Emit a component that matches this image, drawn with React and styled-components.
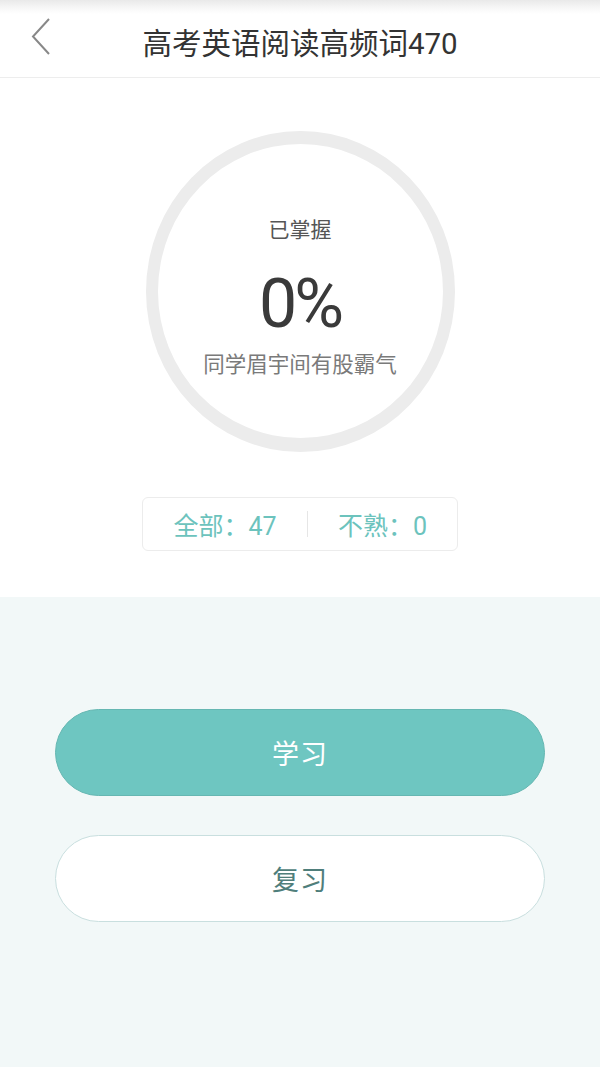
import React from 'react';
import styled, { createGlobalStyle } from 'styled-components';

const GlobalStyle = createGlobalStyle`
    html, body {
        margin: 0;
        padding: 0;
        background: #f2f8f8;
    }
    body {
        font-family: Roboto, "Noto Sans CJK SC", sans-serif;
    }
`

const Page = styled.div`
    width: 600px;
    min-height: 1067px;
    display: flex;
    flex-direction: column;
    background: #f2f8f8;
`

const Header = styled.header`
    height: 77px;
    display: flex;
    align-items: center;
    justify-content: center;
    position: relative;
    background: linear-gradient(#e9e9e9 0px, #f7f7f7 8px, #ffffff 14px);
    border-bottom: 1px solid #ededed;
`

const Back = styled.button`
    position: absolute;
    left: 26px;
    top: 16px;
    width: 30px;
    height: 42px;
    border: none;
    background: none;
    padding: 0;
    display: flex;
    align-items: center;
    justify-content: center;
`

const Title = styled.h1`
    margin: 0;
    margin-top: 4px;
    font-size: 29.5px;
    font-weight: 400;
    color: #333;
`

const Top = styled.section`
    background: #fff;
    display: flex;
    flex-direction: column;
    align-items: center;
    padding: 53px 0 46px;
`

const Ring = styled.div`
    box-sizing: border-box;
    width: 309px;
    height: 321px;
    border: 12px solid #ececec;
    border-top-width: 13px;
    border-bottom-width: 14px;
    border-radius: 50%;
    display: flex;
    flex-direction: column;
    align-items: center;
    padding-top: 72px;
`

const Label = styled.div`
    font-size: 21px;
    color: #555;
    line-height: 28px;
`

const Percent = styled.div`
    font-size: 68px;
    font-weight: 400;
    color: #3a3a3a;
    line-height: 76px;
    letter-spacing: -3px;
    margin-top: 22px;
`

const Slogan = styled.div`
    font-size: 21.5px;
    color: #7a7a7a;
    line-height: 28px;
    margin-top: 9px;
`

const Stats = styled.div`
    margin-top: 45px;
    width: 314px;
    height: 52px;
    border: 1px solid #ececec;
    border-radius: 6px;
    display: flex;
    align-items: center;
`

const Stat = styled.div`
    flex: ${p => p.$grow};
    text-align: center;
    font-size: 25px;
    color: #6cc3bd;
`

const Divider = styled.div`
    width: 1px;
    height: 26px;
    background: #e6e6e6;
`

const Bottom = styled.section`
    flex: 1;
    display: flex;
    flex-direction: column;
    align-items: center;
    gap: 39px;
    padding-top: 112px;
`

const Button = styled.button`
    width: 490px;
    height: 87px;
    border-radius: 44px;
    font-family: Roboto, "Noto Sans CJK SC", sans-serif;
    font-size: 27px;
    letter-spacing: 1px;
    cursor: pointer;
    background: ${p => p.$primary ? '#6ec6c1' : '#ffffff'};
    color: ${p => p.$primary ? '#ffffff' : '#4f7e7b'};
    border: 1px solid ${p => p.$primary ? '#66b7b2' : '#c9dfdf'};
`

const App = () => {
    return(
        <Page>
            <GlobalStyle />
            <Header>
                <Back>
                    <svg width="22" height="40" viewBox="0 0 22 40">
                        <path d="M19 2 L3 19.5 L19 37" fill="none" stroke="#888" strokeWidth="2" />
                    </svg>
                </Back>
                <Title>高考英语阅读高频词470</Title>
            </Header>
            <Top>
                <Ring>
                    <Label>已掌握</Label>
                    <Percent>0%</Percent>
                    <Slogan>同学眉宇间有股霸气</Slogan>
                </Ring>
                <Stats>
                    <Stat $grow={165}>全部：47</Stat>
                    <Divider />
                    <Stat $grow={150}>不熟：0</Stat>
                </Stats>
            </Top>
            <Bottom>
                <Button $primary>学习</Button>
                <Button>复习</Button>
            </Bottom>
        </Page>
    )
}

export default App;
